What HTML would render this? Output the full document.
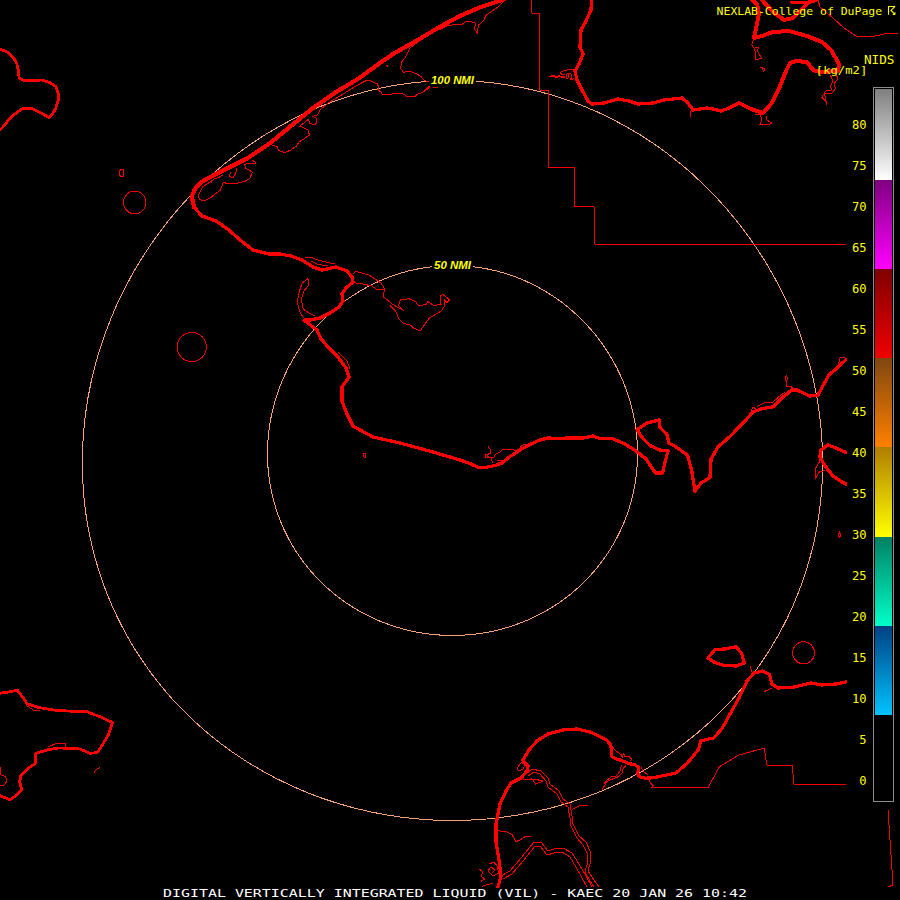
<!DOCTYPE html>
<html><head><meta charset="utf-8"><title>DIGITAL VERTICALLY INTEGRATED LIQUID (VIL) - KAEC</title>
<style>
html,body{margin:0;padding:0;background:#000;}
body{width:900px;height:900px;overflow:hidden;}
svg{display:block;}
.mono{font-family:"DejaVu Sans Mono","Liberation Mono",monospace;}
.ring{fill:none;stroke:#f4a27a;stroke-width:1;}
.thick{fill:none;stroke:#fe0000;stroke-linejoin:round;stroke-linecap:round;}
.thin{fill:none;stroke:#f40000;stroke-width:1;stroke-linejoin:round;}
</style></head>
<body>
<svg width="900" height="900" viewBox="0 0 900 900">
<defs>
<linearGradient id="gW" x1="0" y1="0" x2="0" y2="1"><stop offset="0" stop-color="#7f7f7f"/><stop offset="1" stop-color="#ffffff"/></linearGradient>
<linearGradient id="gP" x1="0" y1="0" x2="0" y2="1"><stop offset="0" stop-color="#7f007f"/><stop offset="1" stop-color="#ff00ff"/></linearGradient>
<linearGradient id="gR" x1="0" y1="0" x2="0" y2="1"><stop offset="0" stop-color="#7f0000"/><stop offset="1" stop-color="#f00000"/></linearGradient>
<linearGradient id="gO" x1="0" y1="0" x2="0" y2="1"><stop offset="0" stop-color="#7f4610"/><stop offset="1" stop-color="#ff8000"/></linearGradient>
<linearGradient id="gY" x1="0" y1="0" x2="0" y2="1"><stop offset="0" stop-color="#b07d00"/><stop offset="1" stop-color="#ffff00"/></linearGradient>
<linearGradient id="gT" x1="0" y1="0" x2="0" y2="1"><stop offset="0" stop-color="#007f62"/><stop offset="1" stop-color="#00ffc8"/></linearGradient>
<linearGradient id="gB" x1="0" y1="0" x2="0" y2="1"><stop offset="0" stop-color="#003f80"/><stop offset="1" stop-color="#00c4ff"/></linearGradient>
</defs>
<rect width="900" height="900" fill="#000"/>
<g shape-rendering="crispEdges">
<!-- range rings -->
<path class="ring" d="M476.0,81.3 L491.7,82.7 L507.3,84.9 L522.8,87.7 L538.1,91.2 L553.4,95.5 L568.4,100.4 L583.3,106.0 L597.9,112.2 L612.2,119.1 L626.3,126.7 L640.1,134.8 L653.6,143.6 L666.7,153.0 L679.4,162.9 L691.7,173.4 L703.6,184.5 L715.0,196.0 L726.0,208.1 L736.4,220.6 L746.4,233.5 L755.8,246.9 L764.7,260.6 L773.0,274.8 L780.7,289.2 L787.8,304.0 L794.3,319.1 L800.2,334.4 L805.4,349.9 L809.9,365.7 L813.8,381.6 L817.0,397.6 L819.5,413.7 L821.2,429.9 L822.3,446.1 L822.7,462.4 L822.4,478.6 L821.3,494.8 L819.5,510.9 L817.0,526.9 L813.8,542.7 L809.8,558.3 L805.2,573.8 L799.8,589.0 L793.8,603.9 L787.1,618.5 L779.7,632.8 L771.6,646.8 L762.9,660.4 L753.6,673.6 L743.6,686.3 L733.1,698.6 L721.9,710.4 L710.3,721.7 L698.0,732.5 L685.3,742.7 L672.1,752.4 L658.5,761.5 L644.4,770.0 L629.9,777.9 L615.0,785.2 L599.8,791.8 L584.3,797.7 L568.5,803.0 L552.5,807.6 L536.2,811.5 L519.8,814.7 L503.2,817.2 L486.6,819.0 L469.8,820.1 L453.0,820.5 L436.3,820.2 L419.5,819.1 L402.8,817.4 L386.3,814.9 L369.8,811.7 L353.6,807.9 L337.5,803.3 L321.7,798.1 L306.2,792.2 L291.0,785.6 L276.1,778.4 L261.6,770.5 L247.4,762.1 L233.7,753.0 L220.5,743.4 L207.8,733.2 L195.5,722.4 L183.8,711.1 L172.6,699.4 L162.0,687.1 L152.0,674.4 L142.7,661.2 L133.9,647.7 L125.8,633.7 L118.4,619.4 L111.6,604.8 L105.5,589.9 L100.1,574.7 L95.4,559.3 L91.5,543.7 L88.2,527.9 L85.6,511.9 L83.8,495.8 L82.7,479.7 L82.3,463.4 L82.6,447.2 L83.7,430.9 L85.4,414.7 L87.8,398.6 L91.0,382.6 L94.8,366.7 L99.3,350.9 L104.5,335.4 L110.3,320.0 L116.7,305.0 L123.8,290.2 L131.5,275.7 L139.7,261.5 L148.6,247.8 L158.0,234.4 L167.9,221.4 L178.3,208.8 L189.3,196.8 L200.7,185.2 L212.5,174.1 L224.8,163.6 L237.5,153.6 L250.6,144.2 L264.0,135.4 L277.8,127.2 L291.9,119.6 L306.2,112.6 L320.8,106.3 L335.6,100.7 L350.7,95.8 L365.9,91.5 L381.3,87.9 L396.8,85.0 L412.3,82.8 L428.0,81.4"/>
<path class="ring" d="M473.0,266.7 L480.8,267.8 L488.6,269.2 L496.3,270.9 L503.9,273.0 L511.4,275.4 L518.8,278.2 L526.1,281.3 L533.3,284.7 L540.3,288.4 L547.1,292.4 L553.8,296.7 L560.4,301.2 L566.7,306.1 L572.8,311.3 L578.7,316.6 L584.4,322.3 L589.8,328.2 L595.0,334.3 L599.9,340.6 L604.5,347.2 L608.9,353.9 L613.0,360.8 L616.8,367.9 L620.3,375.2 L623.5,382.5 L626.4,390.0 L629.0,397.7 L631.2,405.4 L633.1,413.2 L634.7,421.0 L635.9,429.0 L636.8,436.9 L637.3,444.9 L637.5,452.9 L637.4,460.9 L636.9,468.9 L636.0,476.9 L634.9,484.8 L633.3,492.6 L631.4,500.3 L629.2,508.0 L626.7,515.6 L623.8,523.0 L620.6,530.3 L617.1,537.4 L613.2,544.4 L609.1,551.2 L604.6,557.8 L599.9,564.2 L594.8,570.5 L589.5,576.4 L584.0,582.2 L578.1,587.7 L572.1,592.9 L565.8,597.9 L559.3,602.6 L552.5,607.0 L545.6,611.1 L538.5,614.9 L531.2,618.5 L523.8,621.7 L516.2,624.5 L508.5,627.1 L500.7,629.3 L492.8,631.2 L484.9,632.7 L476.8,633.9 L468.8,634.8 L460.6,635.3 L452.5,635.5 L444.4,635.3 L436.2,634.8 L428.2,633.9 L420.1,632.7 L412.2,631.2 L404.3,629.3 L396.5,627.1 L388.8,624.5 L381.2,621.7 L373.8,618.5 L366.5,614.9 L359.4,611.1 L352.5,607.0 L345.7,602.6 L339.2,597.9 L332.9,592.9 L326.9,587.7 L321.0,582.2 L315.5,576.4 L310.2,570.5 L305.1,564.2 L300.4,557.8 L295.9,551.2 L291.8,544.4 L287.9,537.4 L284.4,530.3 L281.2,523.0 L278.3,515.6 L275.8,508.0 L273.6,500.3 L271.7,492.6 L270.1,484.8 L269.0,476.9 L268.1,468.9 L267.6,460.9 L267.5,452.9 L267.7,444.9 L268.2,436.9 L269.1,429.0 L270.3,421.0 L271.9,413.2 L273.8,405.4 L276.0,397.7 L278.6,390.0 L281.5,382.5 L284.7,375.2 L288.2,367.9 L292.0,360.8 L296.1,353.9 L300.5,347.2 L305.1,340.6 L310.0,334.3 L315.2,328.2 L320.6,322.3 L326.3,316.6 L332.2,311.3 L338.3,306.1 L344.6,301.2 L351.2,296.7 L357.9,292.4 L364.7,288.4 L371.7,284.7 L378.9,281.3 L386.2,278.2 L393.6,275.4 L401.1,273.0 L408.7,270.9 L416.4,269.2 L424.2,267.8 L432.0,266.7"/>
<circle class="thin" cx="134.7" cy="202.5" r="11.3"/>
<circle class="thin" cx="191.7" cy="347" r="14.6"/>
<circle class="thin" cx="803.6" cy="652.8" r="11"/>
<path class="thin" d="M123.5,169.5 V176.5 H121 L119,175 V171.5 L121,169.5 Z"/>
<path class="thin" d="M363.5,453.5 h2 l0.5,3 l-1,1.5 l-1.5,-1.5 Z"/>
<path class="thin" d="M839.5,532 l1,3 l-1,3 l-1,-3 Z"/>
<path class="thin" d="M211.8,180.9 L202.4,187.1 L198.6,194.9 L199.3,199.5 L204,201.1 L210.2,198 L214.9,194.1 L220.3,190.2 L223.4,182.4 L228.9,184 L236.7,183.2 L244.4,181.6 L249.9,178.5 L252.2,172.3 L249.1,170 L246,168.4 L244.4,164.5 L249.1,163 L256.1,163 L252.2,159.9 M272.4,145.1 L277.1,146.7 L278.6,150.5 L284.9,152.6 L291.1,149.8 L296.5,145.9 L298.9,142 L305.1,138.1 L309.4,135 L308.2,130.3 L304.3,128 L299.6,126.1 L303.5,123.3 L308.2,119.4 L309.8,123.3 L314.4,124.9 L316.8,122.6 L316,117.9 L312.9,116.3 L317.5,114.8 L320.6,109.3 L325.3,105.4 L329.2,102.3 L340,96 L355,86.5 L366.7,80.3 L370,80.6 L373.3,82.2 L377.2,83.9 L378.9,87.2 L377.8,89.4 L381.1,92.2 L382.2,94.1 L392.2,94.1 L393.3,93.3 L402.2,93.3 L406.7,96.3 L415,96.3 L418.9,93.3 L422.2,92.8 L426.7,89.4 L429.4,86.7 M350,89.4 L356.7,85.6 L362.2,82.8 L366.7,80.3 M433.3,87.4 L437.8,87.8 M428.9,81.7 L424.4,80.6 L421.1,76.7 L416.7,73.9 L410,71.4 L403.3,72.2 L400.6,68.3 L401.7,61.7 L405.6,57.2 L410,48 L424,37 L436,31 L448.7,25.3 L462.7,24 L466,21.3 L471.3,21.6 L475.3,23.3 L474.7,29.3 L477.3,33.3 L478.4,25.3 L484,20 L486,15.3 L494.7,9.3 L500,5.3 L504,1.3 M531,0 L532,13 L539,13 L539,44 L540,90 L548,90 L548,167 L574,167 L574,206 L594,206 L595,244 L846,244 M574.7,69.3 L569.3,69.3 L565.3,70.7 L561.3,71.3 L560.3,72.7 L562,74.7 L565.3,75 M566,74.3 L569.3,73.3 L572,74.7 L571.7,78 L570.3,79.3 L572.7,79.3 L574.3,78.3 M690,111 L690,117 M818,0 L820,7 L833,18 L844,28 L856,36 L871,37 L884,34 L898,33 M753.4,40.4 L751.6,44.7 L754.1,48.3 L755.3,52 L755.3,59.3 L762,58.7 L757.1,50.8 L758.9,47.7 L755.3,47.7 M759.6,66.7 L765.1,69.1 L763.8,71.6 L762,67.3 M754.7,115 L760.2,114.4 L762,120.5 L759.6,124.7 L769.3,124.7 L771.5,122.9 L766.9,119.9 L766.3,115.6 M830.5,75.2 L832.9,81.3 L830.5,86.2 L831.7,89.9 L825.6,91.1 L821.9,97.2 L825.6,100.9 L826.8,104.6 L825.6,98.5 L824.4,93.6 L831.7,93.6 L835.4,88.7 L834.1,83.8 L837.8,78.9 L836.6,75.2 M308,278.6 L302.3,282.8 L299.4,291.3 L297.2,301.7 L299.4,311.1 L303.2,317.7 M308,278.6 L308.5,285.6 L304.2,290.3 L301.3,299.8 L303.2,309.2 L308.9,313 L314.6,315.8 M353.3,273.3 L356.1,271.4 L362.7,273.3 L369.3,275.2 L375,279 L380.7,282.8 L384.4,288.4 L383.5,296.9 L388.2,300.7 L392.9,304.5 L399.6,308.3 L403.3,310.2 L398.6,305.4 L400.5,299.8 L409,298.8 L415.6,301.7 L418.4,305.8 L426,304.5 L427.9,301.7 L433.6,305.4 L441.1,304.5 L440.2,296 L443,294.5 L449.6,299.8 L446.8,302.6 L444,298.8 L444.9,305.4 L441.1,311.1 L436.4,313.9 L429.8,317.7 L426,322.4 L420.3,330.9 L413.7,328.1 L410.9,325.3 L403.3,323.4 L398.6,318.7 L395.8,311.1 L390.1,305.4 M354.2,282.8 L361.8,283.7 L365.6,284.7 L371.2,285.6 L376.9,289.4 L383.5,289.4 M305.1,257.3 L310.8,257.3 L318.3,260.1 L329.7,262.9 L335.3,263.9 M338,352 L347,361 L350,369 M488,446.5 L491,450 L490.5,453.5 L486.5,454.5 L489.5,458 L493.5,457.5 L495.5,454.5 L500,452 L503.5,449 L513,449.2 L515,451 L519,449 L522,445.5 L526,444 L530,444 M491,458.5 L493,463 M821,451 L819.4,462 L815,469 L815,479 L819.4,472 L825,470.5 M838,366 L840,358 L845,357 M526,774 L532,769 L541,771 L548,778 L550,784 L559,791 L563,799 L570,804 L572,816 L573,824 L579,836 L586,842 L590,851 L591,860 L588,871 L594,880 L599,887 M528,776 L534,772 L540,774 L546,781 L548,787 L557,794 L561,802 L568,807 L570,818 L571,826 L577,838 L583,845 L587,853 L588,861 L585,872 L590,881 L594,887 M571.9,809.8 L578.9,805.9 L588.2,805.1 M523,780 L534,779 L543,781 L536,784 M498,830.8 L505.8,831.5 L512,834.6 L515.9,841.6 L519.8,840.1 L524.4,837 L531.4,836.2 M501,876 L510,871 L521,858 L534,842 L541,842 L548,851 L554,849 L563,848 L572,853 L579,864 L586,876 L592,887 M503,879 L512,874 L523,861 L535,846 L540,846 L547,855 L554,853 L562,852 L570,857 L576,867 L582,878 L587,887 M602.2,789.5 L606.9,781.8 L610.6,779.8 L614.4,778.2 L618.3,776.7 L622.2,772.8 L623,768.9 L626.1,765 M649.4,780.5 L651,783.7 L653.3,785.6 L651.4,787.9 L708,787.8 L719.4,766.7 L739,755 L764.4,748 L766.7,765 L792.5,765 L793.6,784 L846,784 M479.3,869 L483,872 L481,876 L484.8,879 L481,881.3 M489,864 L494,862 L497,866 L499,873 L493,875.9 L488,871 L491,867 L495,870 L492,873 M481.7,886.7 L487,884.5 L493.3,883.6 M764,691.7 L772,688 M750,666 L752.8,674.4 M888,810 L893,885 L888,887 M25.8,705 L33.3,710 L40,710.8 M48.3,746.7 L55,744 L65,743.3 L65.5,747.5 M94,772.5 L97,769 L99.7,767.5 M0,766.7 L0.8,775 L5.8,776.7 L6.7,781.7 L4.2,785 L0,785 M230.4,171.5 L229.7,176.2 L232.8,177.8 L235.9,173.1 L236.7,168.4 M211,182.4 L213.3,179.3 L219.5,177 L223.4,174.6 M386.7,65.2 L388.3,67.2 M310.8,261 L318.3,264.8 L327.8,265.4 M566.3,75 L566,77 L567.3,78.7 L568.7,77 L568.3,74.3 M485,454 L487.5,454 L487.5,457 L485,457 L485,454 M497,460 L503,460 L500,463 M517.4,767.8 L521.3,762.3 L525.2,764.7 L522.9,769.3 L518.2,770.9 L517.4,767.8 M531.4,777.9 L536.1,784.9 M603.6,784.4 L606.7,780.5 L611.3,776.7 L615.2,776.7 L618.3,773.5 L620.7,769.7 L621.4,764.6 M612.5,745.6 L614.1,749.4 L618.3,752.6 L621.4,754.9 L622.2,757.6 L623.4,753.3 L624.9,756.4 L629.2,756.8 L631.5,759.2 L630.4,761.1 M641.3,767.3 L643.2,771.2 L647.9,774.7 M785,378 L787,383 L786,387 L790,386 L793,388 M785,378 L786.5,376 L788,379.5 M757,406.5 L765,402.5 L772,403 L778,397.5 L785,392 M751,411 L753,407 L756,409"/>
<path class="thick" stroke-width="2.8" d="M0,49.2 L6.7,51.7 L13.3,57.5 L16.7,63.3 L18.3,70 L19.2,78.3 L25,80.8 L33.3,80.5 L41.7,80 L50,82.5 L55.8,86.7 L58.3,93.3 L58.3,100 L55.8,108.3 L52.5,114 L49,117.5 L41.7,113.3 L31.7,108.3 L23.3,108.3 L16.7,112.5 L10,118.3 L3.3,126.7 L0,130"/>
<path class="thick" stroke-width="4.2" d="M504,-1 L500,0.7 L480,7.3 L460,16 L440,26.7 L420,38.7 L393,54 L380,63 L358,79 L336,92 L313,108 L291,126 L269,144 L247,158.5 L228.9,167.5 L214.9,174.5 L202.4,181.5 L195,189 L191.8,196.4 L194,207"/>
<path class="thick" stroke-width="3.3" d="M191.8,196.4 L194,207 L202,216 L216,221 L229,230 L240,240 L253,250 L269,254 L280,254 L291,256 L302,260 L313,267 L322,270 L336,267 L347,271 L352,277 L353,282 L346,288 L342,294 L343,301 L339,307 L330,313 L320,318 L310,320 L304,320 L309,324 L317,330 L321,339 L329,348 L338,357 L346,368 L349,377 L342,387 L342,401 L347,414 L353,426 L360,430 L373,437 L400,443 L433,452 L460,460 L470,463.5 L478,467.3 L485,467.5 L495,465.5 L502,463 L510,456.5 L520,450 L530,444.5 L540,440 L548,438 L560,438.6 L567,438 L583,438 L593,436 L600,438.6 L612.5,438.6 L625,444 L636,451 L646,459 L655.5,473 L662.5,473 L665,462 L668,451 L661,450.5 L650,445.5 L641.7,437 L637,429.5 L647,423 L659,420 L660,427.5 L666.7,434 L669,443 L676,447 L687.5,455 L691.7,470.5 L695,491 L701,483 L710,477.5 L711,459 L718,447 L730.5,436 L744,422 L753,412 L761,409 L773.6,406.7 L782,398 L791.7,390 L797,390 L809.7,396 L818,395 L829,374.7 L837.5,367.8 L846,359.4"/>
<path class="thick" stroke-width="3.4" d="M846,452.5 L836,448 L828,445 L821,450 L820,456.7 L825,466 L833,476 L841.7,481.7 L846,484"/>
<path class="thick" stroke-width="3.3" d="M591.5,0 L591,10 L585.5,22 L581,30 L580,47 L583,54 L579,64 L575,71 L577,80 L582,90 L588,101 L592,104 L604,103 L618,99 L629,101 L638,104 L653,103 L664,100 L682,98 L688,103 L693,110 L707,108 L713,109 L721,111 L729,108 L739,103"/>
<path class="thick" stroke-width="4.0" d="M739,103 L751,109 L763,113 L771,104 L778,91 L786,71 L790,63 L796,61 L807,62 L813,70 L820,72 L838,71 L839,64 L831,50 L822,42 L807,36 L789,31 L773,32 L762,36 L754,38 L757,24 L759,13 L757,4 L752,0"/>
<path class="thick" stroke-width="4.0" d="M762,0 L773,12 L784,20 L793,18 L802,9 L809,2 L816,0"/>
<path class="thick" stroke-width="3.0" d="M791,2 L807,3"/>
<path class="thick" stroke-width="2.8" d="M0,693.3 L8.3,692 L17.5,690.3 L21.7,695.8 L27.5,704 L38.3,707.5 L53.3,710 L66.7,711 L86.7,711.7 L100,716.7 L112.5,722.5 L108.3,735 L103.3,743.3 L97.5,752.5 L90,753.3 L80,749 L70,748.3 L58.3,748 L48.3,749.7 L35.8,753.3 L35.3,763.3 L28.3,768.3 L20.8,775.8 L19.7,781.7 L21.7,790 L15.8,795.8 L10,799.7 L0,795.8"/>
<path class="thick" stroke-width="3.2" d="M498,887 L501,876 L499,860 L496,842 L496,824 L500,804 L506,791 L511,783 L521,778 L527,771 L528,766 L523,760 L529,750 L537,741 L548,734 L563,730 L577,729 L590,732 L601.2,737.4 L606.7,740.1 L610.6,744.8 L611.7,751 L611.7,756.4 L616,758.8 L622.2,760.7 L628.4,763.4 L635.4,765 L638.5,767.3 L637.8,773.5 L639.3,776.7 L645.5,778.2 L653.3,777.8 L676,773 L687.5,763 L698.6,749.4 L700.5,741 L714,737.8 L722,728.6 L732,710.5 L739,698 L747,681 L754,673 L762.5,671 L769.4,674.4 L772,684 L778,688 L794.4,687 L811,683 L822,685 L836,684 L846,682"/>
<path class="thick" stroke-width="1.7" d="M550,76.5 L553.3,75.9 L556.7,77.3 L559.3,76 L561.5,76.8 L564.7,77.3"/>
<path class="thick" stroke-width="1.8" d="M424.5,91 L427,88.8 L429.5,86.5"/>
<path class="thick" stroke-width="3.2" d="M708,658 L715,649.4 L725,649 L736,646.7 L741.7,653.6 L744.4,663 L736,666 L723.6,665.5 L714,662Z"/>
</g>
<!-- ring labels -->
<g font-family="'Liberation Sans',sans-serif" font-weight="bold" font-style="italic" font-size="11.5" fill="#ffff00">
<text x="431" y="84.3" textLength="43" lengthAdjust="spacingAndGlyphs">100 NMI</text>
<text x="434" y="269.3" textLength="37" lengthAdjust="spacingAndGlyphs">50 NMI</text>
</g>
<!-- colour bar -->
<g shape-rendering="crispEdges">
<rect x="847" y="80" width="26" height="722" fill="#000"/>
<rect x="873.5" y="87.5" width="20" height="714" fill="#000" stroke="#8c8c8c" stroke-width="1"/>
<rect x="875" y="89" width="17" height="91" fill="url(#gW)"/>
<rect x="875" y="180" width="17" height="89" fill="url(#gP)"/>
<rect x="875" y="269" width="17" height="89" fill="url(#gR)"/>
<rect x="875" y="358" width="17" height="89" fill="url(#gO)"/>
<rect x="875" y="447" width="17" height="89.5" fill="url(#gY)"/>
<rect x="875" y="536.5" width="17" height="89" fill="url(#gT)"/>
<rect x="875" y="625.5" width="17" height="89.5" fill="url(#gB)"/>
</g>
<g class="mono" font-size="12.3" fill="#ffff00">
<text x="859.2" y="784.6" textLength="7.3" lengthAdjust="spacingAndGlyphs">0</text>
<text x="859.2" y="743.6" textLength="7.3" lengthAdjust="spacingAndGlyphs">5</text>
<text x="851.9" y="702.6" textLength="14.6" lengthAdjust="spacingAndGlyphs">10</text>
<text x="851.9" y="661.6" textLength="14.6" lengthAdjust="spacingAndGlyphs">15</text>
<text x="851.9" y="620.6" textLength="14.6" lengthAdjust="spacingAndGlyphs">20</text>
<text x="851.9" y="579.6" textLength="14.6" lengthAdjust="spacingAndGlyphs">25</text>
<text x="851.9" y="538.6" textLength="14.6" lengthAdjust="spacingAndGlyphs">30</text>
<text x="851.9" y="497.6" textLength="14.6" lengthAdjust="spacingAndGlyphs">35</text>
<text x="851.9" y="456.6" textLength="14.6" lengthAdjust="spacingAndGlyphs">40</text>
<text x="851.9" y="415.6" textLength="14.6" lengthAdjust="spacingAndGlyphs">45</text>
<text x="851.9" y="374.6" textLength="14.6" lengthAdjust="spacingAndGlyphs">50</text>
<text x="851.9" y="333.6" textLength="14.6" lengthAdjust="spacingAndGlyphs">55</text>
<text x="851.9" y="292.6" textLength="14.6" lengthAdjust="spacingAndGlyphs">60</text>
<text x="851.9" y="251.6" textLength="14.6" lengthAdjust="spacingAndGlyphs">65</text>
<text x="851.9" y="210.6" textLength="14.6" lengthAdjust="spacingAndGlyphs">70</text>
<text x="851.9" y="169.6" textLength="14.6" lengthAdjust="spacingAndGlyphs">75</text>
<text x="851.9" y="128.6" textLength="14.6" lengthAdjust="spacingAndGlyphs">80</text>
</g>
<g class="mono" fill="#ffff00">
<text x="716.6" y="15" font-size="10.6" textLength="165.5" lengthAdjust="spacingAndGlyphs">NEXLAB-College of DuPage</text>
<text x="864" y="64" font-size="11.5" textLength="30.5" lengthAdjust="spacingAndGlyphs">NIDS</text>
<text x="815.8" y="73.5" font-size="11" textLength="51.5" lengthAdjust="spacingAndGlyphs">[kg/m2]</text>
</g>
<path d="M888.5,14.8 V6.5 H895.2 M894.6,6.8 L891,10.4 L894.8,14.2" fill="none" stroke="#ffff00" stroke-width="1.1"/><path d="M895.4,14.9 V11.8 L892.3,14.9 Z" fill="#ffff00"/>
<!-- title strip -->
<rect x="0" y="888" width="886" height="12" fill="#000"/>
<text class="mono" x="163" y="896.5" font-size="10.4" fill="#ffffff" textLength="584" lengthAdjust="spacingAndGlyphs">DIGITAL VERTICALLY INTEGRATED LIQUID (VIL) - KAEC 20 JAN 26 10:42</text>
</svg>
</body></html>
